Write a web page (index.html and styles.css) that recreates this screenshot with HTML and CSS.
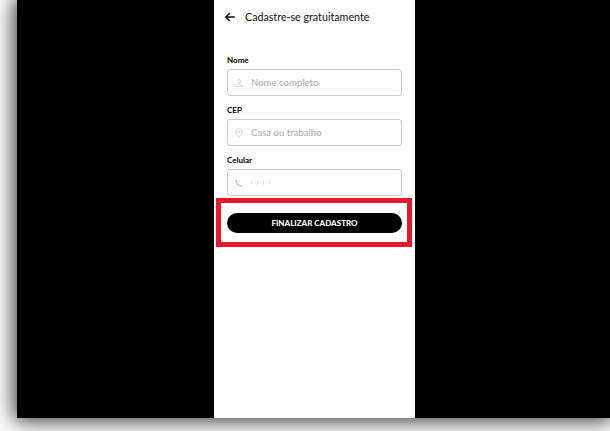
FILE: index.html
```html
<!DOCTYPE html>
<html lang="pt">
<head>
<meta charset="utf-8">
<title>Cadastre-se gratuitamente</title>
<link rel="stylesheet" href="styles.css">
</head>
<body>
<div class="window">
  <main class="panel">
    <header class="header">
      <svg class="back" width="10" height="10" viewBox="0 0 10 10" aria-hidden="true"><path d="M9.800 5H1M4.800 1 0.900 5l3.900 4" fill="none" stroke="#111" stroke-width="1.500"/></svg>
      <h1 class="title">Cadastre-se gratuitamente</h1>
    </header>
    <form class="form">
      <div class="field">
        <label class="label">Nome</label>
        <div class="input">
          <svg class="icon" width="8" height="8" viewBox="0 0 8 8" aria-hidden="true"><circle cx="4" cy="2.200" r="1.600" fill="none" stroke="#d0d0d0" stroke-width=".9"/><path d="M.7 7.500C.8 5.600 2.400 5 4 5s3.200.6 3.300 2.500z" fill="none" stroke="#d0d0d0" stroke-width=".9"/></svg>
          <span class="placeholder">Nome completo</span>
        </div>
      </div>
      <div class="field">
        <label class="label">CEP</label>
        <div class="input">
          <svg class="icon" width="8" height="10" viewBox="0 0 8 10" aria-hidden="true"><path d="M4 9.300C2.400 7.300 1 5.600 1 3.800a3 3 0 0 1 6 0C7 5.600 5.600 7.300 4 9.300z" fill="none" stroke="#d0d0d0" stroke-width=".9"/><circle cx="4" cy="3.800" r="1" fill="none" stroke="#d0d0d0" stroke-width=".8"/></svg>
          <span class="placeholder">Casa ou trabalho</span>
        </div>
      </div>
      <div class="field field-last">
        <label class="label">Celular</label>
        <div class="input">
          <svg class="icon" width="8" height="8" viewBox="0 0 8 8" aria-hidden="true"><path d="M1.200.8C.4 3.800 3.600 7.500 7.200 7" fill="none" stroke="#c8c8c8" stroke-width="1.500"/></svg>
          <span class="masked"><i></i><i></i><i></i><i></i></span>
        </div>
      </div>
      <button class="submit" type="button">FINALIZAR CADASTRO</button>
    </form>
  </main>
</div>
<div class="highlight"></div>
</body>
</html>
```
FILE: styles.css
```css
* { box-sizing: border-box; }
html, body { margin: 0; height: 431px; overflow: hidden; background: #fff; }
body { padding-left: 17px; font-family: Lato, "Open Sans", sans-serif; }
.window {
  height: 418px;
  width: 593px;
  background: #000;
  box-shadow: 0 0 20px 3px rgba(0, 0, 0, .8);
}
.panel {
  margin-left: 197px;
  width: 201px;
  height: 418px;
  background: #fff;
  padding: 0 13px;
}
.header { display: flex; align-items: center; height: 33px; gap: 10px; color: #111; }
.back { margin-left: -2px; flex: none; }
.title { margin: 0; font-size: 10.7px; font-weight: 400; color: #111; white-space: nowrap; }
.form { display: flex; flex-direction: column; padding-top: 22px; }
.field { display: flex; flex-direction: column; margin-bottom: 9px; }
.field-last { margin-bottom: 17px; }
.label { font-size: 8px; font-weight: 700; line-height: 10px; height: 14px; color: #000; }
.input {
  display: flex; align-items: center;
  height: 27px;
  border: 1px solid #ccc;
  border-radius: 3px;
  padding-left: 7px;
  background: #fff;
}
.icon { flex: none; margin-right: 8px; }
.placeholder { font-size: 9.6px; color: #a8a8a8; white-space: nowrap; }
.masked { display: flex; gap: 5px; align-items: center; }
.masked i { display: block; width: 1px; height: 5px; background: #e4e4e4; }
.submit {
  height: 20px;
  border: 0;
  border-radius: 10px;
  background: #000;
  color: #fff;
  font: 900 8px Lato, sans-serif;
  padding: 0;
}
.highlight {
  position: absolute; left: 216px; top: 198px;
  width: 196px; height: 49px;
  border: 5px solid #e8192c;
}
```
